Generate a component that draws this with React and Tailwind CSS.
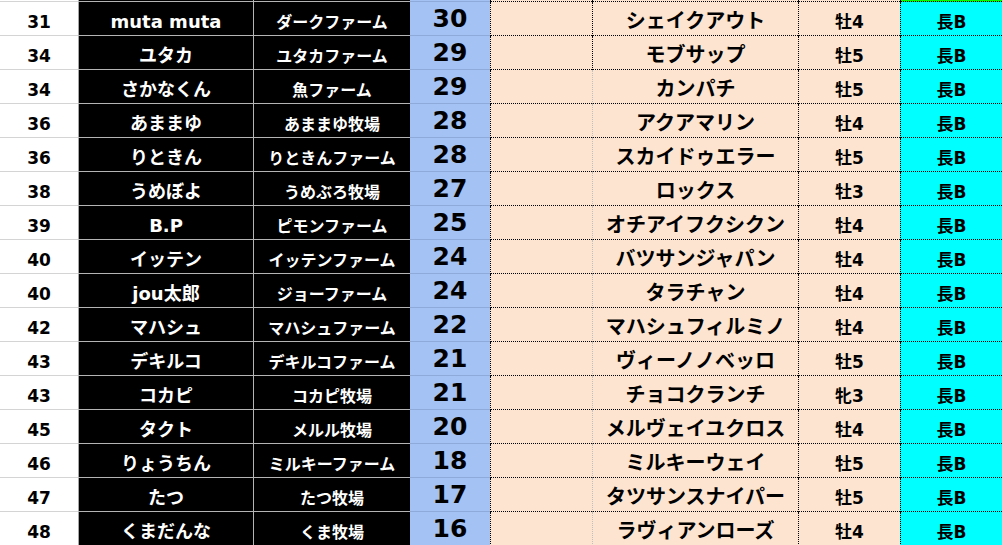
import React from "react";

const rows = [
  ["31", "muta muta", "ダークファーム", "30", "シェイクアウト", "牡4"],
  ["34", "ユタカ", "ユタカファーム", "29", "モブサップ", "牡5"],
  ["34", "さかなくん", "魚ファーム", "29", "カンパチ", "牡5"],
  ["36", "あままゆ", "あままゆ牧場", "28", "アクアマリン", "牡4"],
  ["36", "りときん", "りときんファーム", "28", "スカイドゥエラー", "牡5"],
  ["38", "うめぼよ", "うめぶろ牧場", "27", "ロックス", "牡3"],
  ["39", "B.P", "ピモンファーム", "25", "オチアイフクシクン", "牡4"],
  ["40", "イッテン", "イッテンファーム", "24", "バツサンジャパン", "牡4"],
  ["40", "jou太郎", "ジョーファーム", "24", "タラチャン", "牡4"],
  ["42", "マハシュ", "マハシュファーム", "22", "マハシュフィルミノ", "牡4"],
  ["43", "デキルコ", "デキルコファーム", "21", "ヴィーノノベッロ", "牡5"],
  ["43", "コカピ", "コカピ牧場", "21", "チョコクランチ", "牝3"],
  ["45", "タクト", "メルル牧場", "20", "メルヴェイユクロス", "牡4"],
  ["46", "りょうちん", "ミルキーファーム", "18", "ミルキーウェイ", "牡5"],
  ["47", "たつ", "たつ牧場", "17", "タツサンスナイパー", "牡5"],
  ["48", "くまだんな", "くま牧場", "16", "ラヴィアンローズ", "牡4"],
];

// latin digits in the sheet are wide (Meiryo-ish), DejaVu gets close
const font = { fontFamily: '"DejaVu Sans", "Noto Sans CJK JP", sans-serif' };

const TopStrip = () => (
  <div className="flex h-[2px]">
    <div className="w-[79px] bg-white border-b border-r border-[#d4d4d4] border-r-[#a6a6a6]" />
    <div className="w-[175px] bg-black border-b border-r border-[#b4b4b4]" />
    <div className="w-[156px] bg-black border-b border-[#b4b4b4]" />
    <div className="w-[80px] bg-[#a4c2f4] border-b border-[#8eaadb]" />
    <div className="w-[102px] bg-[#fce4d0] border-b border-l border-dotted border-black" />
    <div className="w-[206px] bg-[#fce4d0] border-b border-l border-dotted border-black" />
    <div className="w-[102px] bg-[#fce4d0] border-b border-l border-dotted border-black" />
    <div className="w-[102px] bg-[#00ff00] border-b border-l border-dotted border-black" />
  </div>
);

const Row = ({ rank, name, farm, pts, horse, sex, plain }) => (
  <div className="flex h-[34px] font-bold leading-none">
    <div className="w-[79px] bg-white border-b border-r border-[#d4d4d4] border-r-[#a6a6a6] flex items-center justify-center pt-[7px] text-[17px] text-black">
      {rank}
    </div>
    <div className="w-[175px] bg-black border-b border-r border-[#b4b4b4] flex items-center justify-center pt-[6px] text-[18px] text-white">
      {name}
    </div>
    <div className="w-[156px] bg-black border-b border-[#b4b4b4] flex items-center justify-center pt-[9px] text-[16px] text-white">
      {farm}
    </div>
    <div className="w-[80px] bg-[#a4c2f4] border-b border-[#8eaadb] flex items-center justify-center text-[25px] text-black">
      {pts}
    </div>
    <div className="w-[102px] bg-[#fce4d0] border-b border-l border-dotted border-black" />
    {plain ? (
      <div className="w-[206px] bg-[#fce4d0] border-b border-dotted border-black border-l border-l-solid border-l-[#bfbfbf] flex items-center justify-center pt-[5px] text-[20px] text-black">
        {horse}
      </div>
    ) : (
      <div className="w-[206px] bg-[#fce4d0] border-b border-l border-dotted border-black flex items-center justify-center pt-[5px] text-[20px] text-black">
        {horse}
      </div>
    )}
    <div className="w-[102px] bg-[#fce4d0] border-b border-l border-dotted border-black flex items-center justify-center pt-[8px] text-[17px] text-black">
      {sex}
    </div>
    <div className="w-[102px] bg-[#00ffff] border-b border-l border-dotted border-black flex items-center justify-center pt-[8px] text-[17px] text-black">
      長B
    </div>
  </div>
);

export default function App() {
  return (
    <div className="w-[1002px] h-[545px] overflow-hidden bg-white" style={font}>
      <TopStrip />
      {rows.map((r, i) => (
        <Row
          key={i}
          rank={r[0]}
          name={r[1]}
          farm={r[2]}
          pts={r[3]}
          horse={r[4]}
          sex={r[5]}
          plain={i >= 2}
        />
      ))}
    </div>
  );
}
